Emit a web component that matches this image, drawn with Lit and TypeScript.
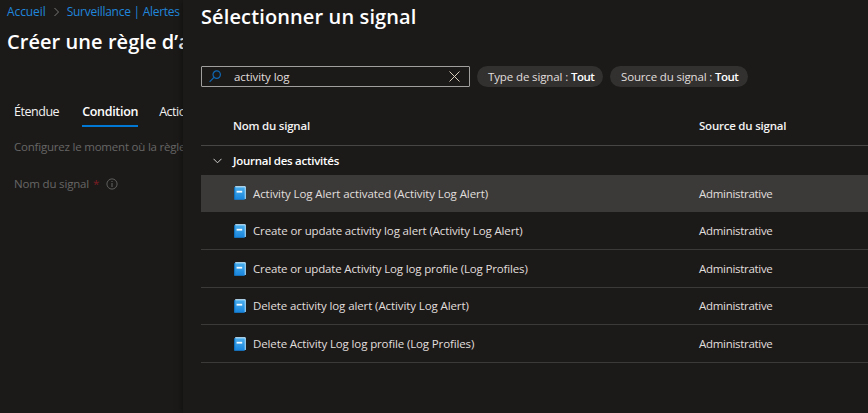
import { LitElement, html, css, svg } from "lit";
import { customElement, property } from "lit/decorators.js";

const bookIcon = svg`
  <defs>
    <linearGradient id="cover" x1="0" y1="0" x2="0" y2="1">
      <stop offset="0" stop-color="#4aaeee" /><stop offset="1" stop-color="#1683dc" />
    </linearGradient>
  </defs>
  <path d="M1.2 0.2H11a.8.8 0 0 1 .8.8V13H1.2Z" fill="#8fd0fb" />
  <path d="M1.4 0.5H11.2V1.3H1.4Z" fill="#e3f4ff" />
  <path d="M10.6 1H11.5V12.8H10.6Z" fill="#a9dcfb" />
  <rect x="0.8" y="1.4" width="9.9" height="12.4" fill="url(#cover)" />
  <rect x="0" y="1" width="1.2" height="12.8" rx="0.5" fill="#1272bd" />
  <rect x="2.6" y="4.8" width="5.6" height="1.8" fill="#f4fbff" />`;

@customElement("signal-row")
export class SignalRow extends LitElement {
  @property() name = "";
  @property() source = "";
  @property({ type: Number }) tracking = 0;

  static styles = css`
    :host {
      display: grid;
      grid-template-columns: 33px 19px 446px 1fr;
      align-items: center;
      box-sizing: border-box;
      height: 37px;
      border-bottom: 1px solid #3b3a39;
      color: #e1dfdd;
      line-height: 16px;
      white-space: nowrap;
    }
    :host([tall]) { height: 38px; }
    :host([selected]) { background: #3b3a39; }
    :host([selected]) span { padding-top: 2px; }
    svg { grid-column: 2; display: block; }
    .source { letter-spacing: -0.299px; }
  `;

  render() {
    return html`
      <svg width="12" height="14" viewBox="0 0 12 14">${bookIcon}</svg>
      <span style="letter-spacing:${this.tracking}px">${this.name}</span>
      <span class="source">${this.source}</span>`;
  }
}

const signals = [
  { name: "Activity Log Alert activated (Activity Log Alert)", tracking: -0.084, tall: false },
  { name: "Create or update activity log alert (Activity Log Alert)", tracking: -0.128, tall: true },
  { name: "Create or update Activity Log log profile (Log Profiles)", tracking: -0.155, tall: true },
  { name: "Delete activity log alert (Activity Log Alert)", tracking: -0.1, tall: false },
  { name: "Delete Activity Log log profile (Log Profiles)", tracking: -0.127, tall: true },
];

@customElement("app-root")
export class AppRoot extends LitElement {
  static styles = css`
    :host {
      display: flex;
      width: 868px;
      height: 413px;
      overflow: hidden;
      background: #1b1a19;
      color: #fff;
      font: 11.5px/16px "Open Sans", "Noto Sans", sans-serif;
      white-space: nowrap;
    }
    * { box-sizing: border-box; }
    svg { display: block; flex: none; }
    .page { width: 183px; flex: none; overflow: hidden; }
    .crumbs { display: flex; align-items: center; height: 23px; padding: 0 0 0 7px; color: #2086dc; font-size: 12px; }
    .crumbs svg { margin: 0 7px 0 7px; }
    .home { letter-spacing: -0.08px; }
    .parent { letter-spacing: -0.27px; }
    h1, h2 { margin: 0; font-size: 20px; line-height: 26px; font-weight: 600; }
    h1 { padding-left: 7px; margin-top: 6px; letter-spacing: 0.06px; }
    .tabs { display: flex; gap: 23px; margin-top: 45px; padding-left: 14px; height: 28px; font-size: 12.5px; color: #f3f2f1; }
    .tab { height: 27px; padding-top: 4px; letter-spacing: -0.47px; }
    .tab.active { width: 56px; margin-right: -2px; font-weight: 600; letter-spacing: -0.307px; border-bottom: 2px solid #0078d4; color: #fff; }
    .hint { margin-top: 11px; padding-left: 14px; color: #676665; letter-spacing: -0.21px; }
    .field { display: flex; align-items: center; margin-top: 21px; padding-left: 14px; color: #676665; letter-spacing: -0.17px; }
    .required { margin-left: 4px; color: #7c1d23; }
    .field svg { margin-left: 7px; }
    .panel { flex: 1; padding: 4px 0 0 18px; background: #1b1a19; box-shadow: 0 0 7px rgba(0, 0, 0, 0.5); position: relative; }
    h2 { letter-spacing: 0.12px; }
    .filters { display: flex; align-items: center; margin-top: 36px; }
    .search { display: flex; align-items: center; width: 269px; height: 21px; border: 1px solid #a19f9d; border-radius: 1px; padding: 0 9px 0 7px; }
    .query { flex: 1; margin-left: 13px; color: #e1dfdd; letter-spacing: -0.08px; }
    .pill { display: flex; height: 21px; align-items: center; margin-left: 7px; padding-left: 11px; border-radius: 11px; background: #323130; color: #e1dfdd; letter-spacing: -0.12px; white-space: pre; }
    .pill b { font-weight: 600; color: #fff; letter-spacing: -0.5px; }
    .type { width: 126px; }
    .origin { width: 138px; }
    .origin { letter-spacing: -0.16px; }
    .head { display: grid; grid-template-columns: 32px 466px 1fr; align-items: center; height: 59px; padding-top: 19px; border-bottom: 1px solid #484644; font-weight: 600; color: #f3f2f1; letter-spacing: -0.225px; }
    .head span:first-child { grid-column: 2; }
    .group { display: flex; align-items: center; height: 29px; padding: 1px 0 0 12px; font-weight: 600; letter-spacing: -0.264px; }
    .group svg { margin-right: 11px; }
  `;

  render() {
    return html`
      <section class="page">
        <nav class="crumbs">
          <span class="home">Accueil</span>
          <svg width="7" height="10" viewBox="0 0 7 10"><path d="M1.5 1l4 4-4 4" fill="none" stroke="#797775" /></svg>
          <span class="parent">Surveillance | Alertes</span>
        </nav>
        <h1>Créer une règle d’alerte</h1>
        <div class="tabs">
          <span class="tab">Étendue</span>
          <span class="tab active">Condition</span>
          <span class="tab">Actions</span>
        </div>
        <div class="hint">Configurez le moment où la règle d’alerte</div>
        <div class="field">
          <span>Nom du signal</span><span class="required">*</span>
          <svg width="12" height="12" viewBox="0 0 12 12" fill="none" stroke="#676665">
            <circle cx="6" cy="6" r="5.1" stroke-width="0.9" /><path d="M6 5v4M6 3v1" />
          </svg>
        </div>
      </section>
      <section class="panel">
        <h2>Sélectionner un signal</h2>
        <div class="filters">
          <div class="search">
            <svg width="12" height="13" viewBox="0 0 12 13" fill="none" stroke="#0f68b4" stroke-width="1.2">
              <circle cx="7.7" cy="4.6" r="3.7" /><path d="M5 7.3L.6 11.9" />
            </svg>
            <span class="query">activity log</span>
            <svg width="11" height="11" viewBox="0 0 11 11"><path d="M.5.5l10 10M10.5.5l-10 10" stroke="#d8cdbb" /></svg>
          </div>
          <div class="pill type">Type de signal : <b>Tout</b></div>
          <div class="pill origin">Source du signal : <b>Tout</b></div>
        </div>
        <div class="head"><span>Nom du signal</span><span>Source du signal</span></div>
        <div class="group">
          <svg width="9" height="6" viewBox="0 0 9 6"><path d="M.5.8l4 4 4-4" fill="none" stroke="#d2d0ce" /></svg>
          <span>Journal des activités</span>
        </div>
        ${signals.map((s, i) => html`
          <signal-row .name=${s.name} .tracking=${s.tracking} source="Administrative"
            ?tall=${s.tall} ?selected=${i === 0}></signal-row>`)}
      </section>`;
  }
}
